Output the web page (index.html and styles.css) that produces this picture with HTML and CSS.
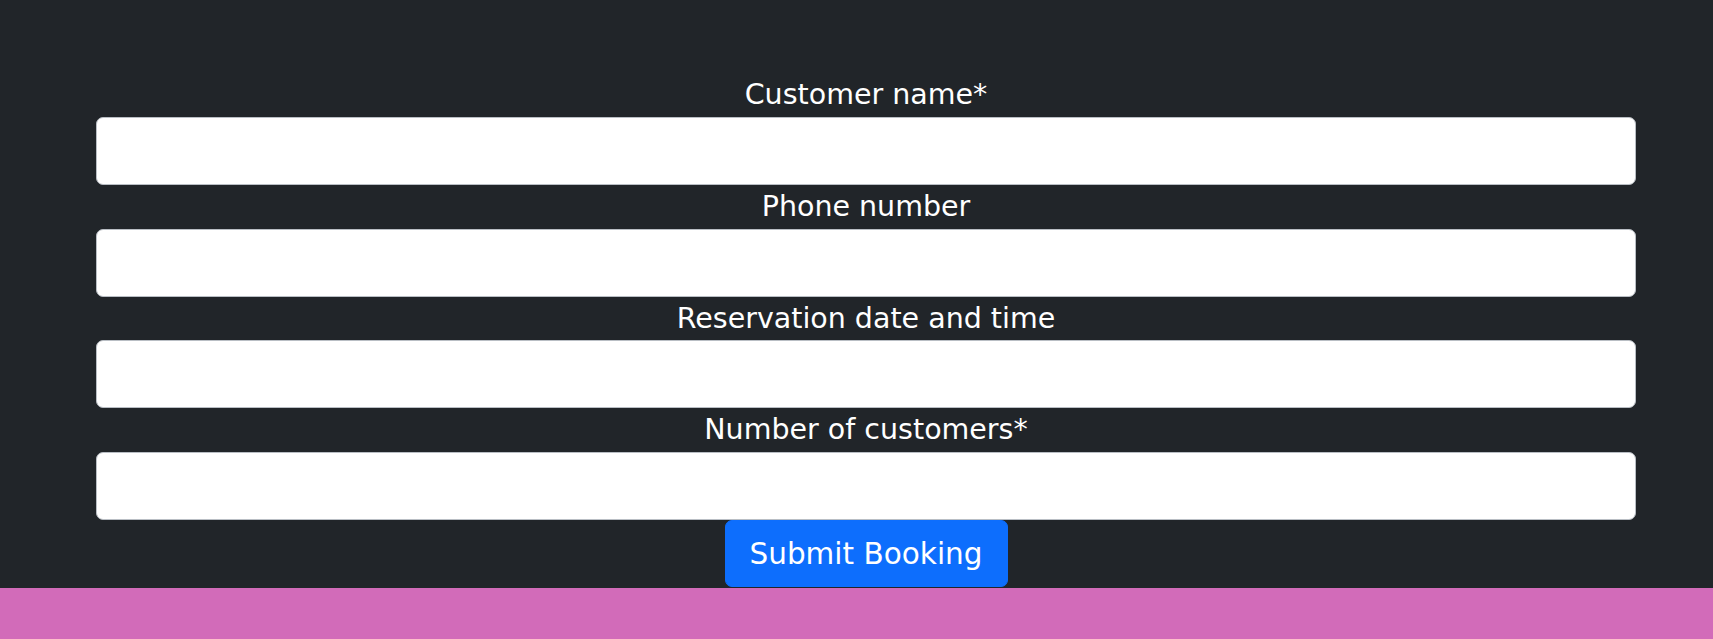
FILE: index.html
```html
<!DOCTYPE html>
<html lang="en">
<head>
<meta charset="utf-8">
<title>Booking</title>
<link rel="stylesheet" href="styles.css">
</head>
<body>
<main class="page">
  <form class="booking">
    <div class="field">
      <label class="label" for="name">Customer name*</label>
      <input class="input" id="name" type="text">
    </div>
    <div class="field">
      <label class="label" for="phone">Phone number</label>
      <input class="input" id="phone" type="text">
    </div>
    <div class="field">
      <label class="label" for="date">Reservation date and time</label>
      <input class="input" id="date" type="text">
    </div>
    <div class="field">
      <label class="label" for="count">Number of customers*</label>
      <input class="input" id="count" type="text">
    </div>
    <div class="actions">
      <button class="submit" type="button">Submit Booking</button>
    </div>
  </form>
</main>
<footer class="footer"></footer>
</body>
</html>
```
FILE: styles.css
```css
html, body {
  margin: 0;
  padding: 0;
}
body {
  background: #212529;
  font-family: "DejaVu Sans", "Open Sans", sans-serif;
  color: #ffffff;
}
.page {
  padding-top: 73px;
  padding-left: 96px;
  padding-right: 77px;
}
.booking {
  display: flex;
  flex-direction: column;
}
.field {
  display: flex;
  flex-direction: column;
  align-items: stretch;
}
.label {
  box-sizing: border-box;
  text-align: center;
  font-size: 28.5px;
  line-height: 42.8px;
  height: 43.8px;
  padding-top: 1px;
}
.input {
  box-sizing: border-box;
  height: 68px;
  width: 100%;
  margin: 0;
  background: #ffffff;
  border: 1px solid #b9bec4;
  border-radius: 7px;
}
.actions {
  display: flex;
  justify-content: center;
}
.submit {
  box-sizing: border-box;
  width: 283px;
  height: 67px;
  background: #0d6efd;
  color: #ffffff;
  border: 1px solid #0d6efd;
  border-radius: 7px;
  font-family: inherit;
  font-size: 29.5px;
  padding: 0;
}
.footer {
  height: 120px;
  margin-top: 1px;
  background: #d26bb9;
}
```
